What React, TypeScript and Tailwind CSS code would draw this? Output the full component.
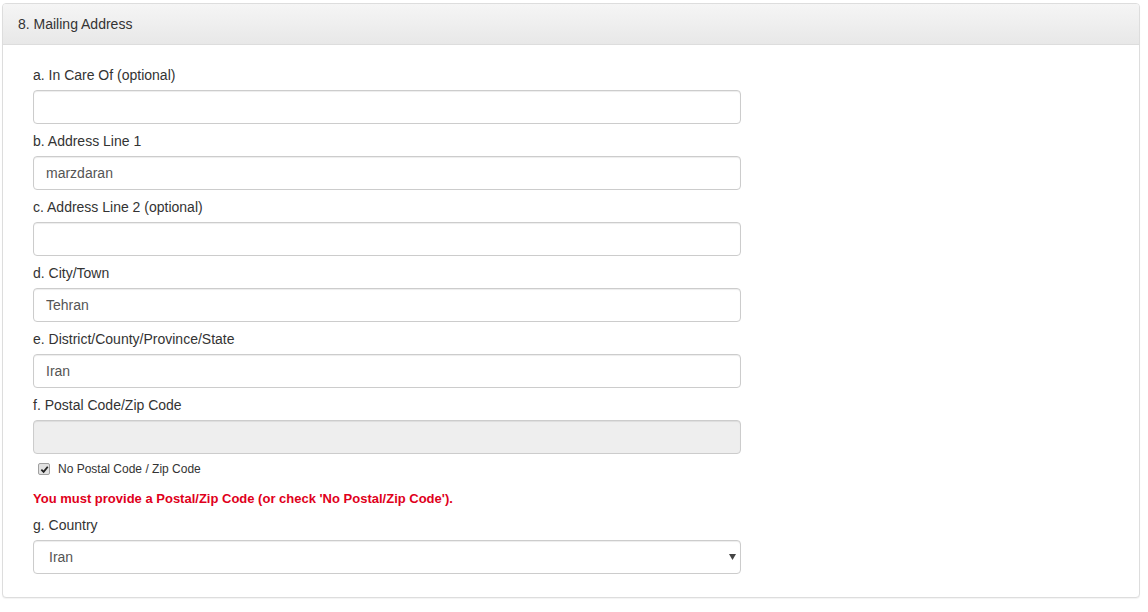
import { useState } from "react";

type Field = { label: string; value: string };

const fields: Field[] = [
  { label: "a. In Care Of (optional)", value: "" },
  { label: "b. Address Line 1", value: "marzdaran" },
  { label: "c. Address Line 2 (optional)", value: "" },
  { label: "d. City/Town", value: "Tehran" },
  { label: "e. District/County/Province/State", value: "Iran" },
];

const inputBase =
  "block w-[708px] h-[34px] px-3 rounded-[4px] border border-[#ccc] text-[14px] text-[#555] shadow-[inset_0_1px_1px_rgba(0,0,0,0.075)] outline-none";

export default function App() {
  const [noPostal, setNoPostal] = useState(true);

  return (
    <div className="min-h-[612px] bg-white pt-[3px] pl-[2px] pr-[8px] font-['Liberation_Sans',Arial,sans-serif] text-[14px] text-[#333]">
      <div className="w-[1138px] rounded-[4px] border border-[#ddd] bg-white shadow-[0_1px_1px_rgba(0,0,0,0.05)]">
        <div className="h-[41px] px-[15px] flex items-center border-b border-[#ddd] rounded-t-[3px] bg-gradient-to-b from-[#f5f5f5] to-[#e8e8e8]">
          8. Mailing Address
        </div>

        <div className="pt-[20px] pb-[23px] pl-[30px]">
          {fields.map((f) => (
            <div key={f.label} className="mb-[7px]">
              <label className="block leading-[20px] mb-[5px]">{f.label}</label>
              <input className={`${inputBase} bg-white`} defaultValue={f.value} />
            </div>
          ))}

          <div>
            <label className="block leading-[20px] mb-[5px]">f. Postal Code/Zip Code</label>
            <input className={`${inputBase} bg-[#eee]`} disabled={noPostal} />
          </div>

          <label className="mt-[7px] ml-[5px] h-[16px] flex items-center gap-[8px] text-[12px] text-[#333] cursor-pointer">
            <span
              onClick={() => setNoPostal(!noPostal)}
              className="w-[12px] h-[12px] rounded-[2px] border border-[#a0a0a0] bg-[#e2e2e2] flex items-center justify-center"
            >
              {noPostal && (
                <svg width="9" height="9" viewBox="0 0 10 10">
                  <path d="M1.5 5.2 L4 7.6 L8.6 2" fill="none" stroke="#222" strokeWidth="2" />
                </svg>
              )}
            </span>
            No Postal Code / Zip Code
          </label>

          <div className="mt-[12px] leading-[20px] text-[13px] font-bold text-[#e0001b]">
            You must provide a Postal/Zip Code (or check 'No Postal/Zip Code').
          </div>

          <div className="mt-[6px]">
            <label className="block leading-[20px] mb-[5px]">g. Country</label>
            <div className="relative w-[708px]">
              <select className={`${inputBase} bg-white appearance-none pl-[15px]`} defaultValue="Iran">
                <option>Iran</option>
              </select>
              <svg
                className="absolute right-[5px] top-[14px] pointer-events-none"
                width="7"
                height="6"
                viewBox="0 0 7 6"
              >
                <path d="M0 0 H7 L3.5 6 Z" fill="#444" />
              </svg>
            </div>
          </div>
        </div>
      </div>
    </div>
  );
}
